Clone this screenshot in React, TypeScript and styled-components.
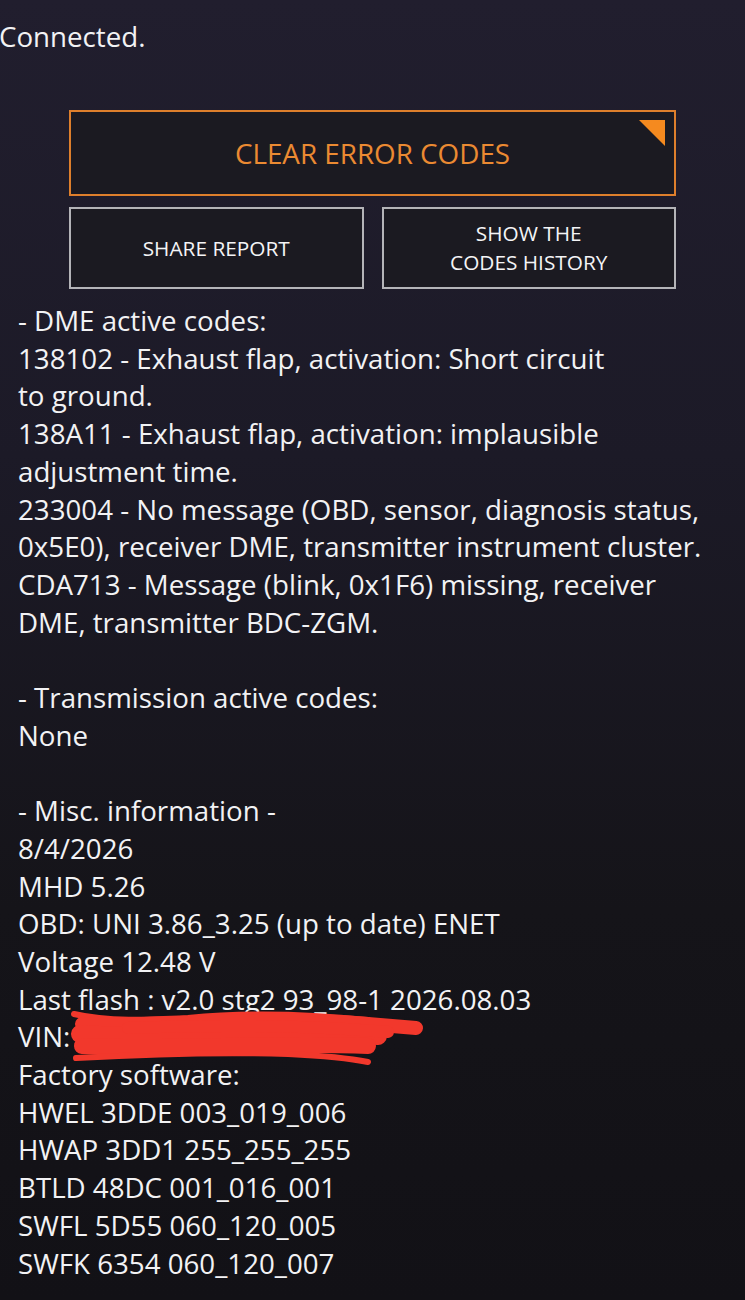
import React from "react";
import styled, { createGlobalStyle } from "styled-components";

const Global = createGlobalStyle`
  html, body { margin: 0; padding: 0; }
  body {
    background: linear-gradient(180deg, #211e2e 0%, #1c1a27 35%, #151419 70%, #121116 100%);
    min-height: 1300px;
    font-family: "Open Sans", "Noto Sans", sans-serif;
    color: #f2f2f4;
  }
`;

const Page = styled.div`
  width: 745px;
  min-height: 1300px;
  display: flex;
  flex-direction: column;
`;

const Status = styled.div`
  font-size: 27.7px;
  line-height: 38px;
  padding: 17px 0 0 0;
  margin-left: -1px;
`;

const Actions = styled.div`
  margin: 55px 0 0 69px;
  width: 607px;
  display: grid;
  grid-template-columns: 1fr 1fr;
  column-gap: 18px;
  row-gap: 11px;
`;

const Button = styled.div<{ $accent?: boolean }>`
  position: relative;
  box-sizing: border-box;
  grid-column: ${(p) => (p.$accent ? "1 / span 2" : "auto")};
  height: ${(p) => (p.$accent ? 86 : 82)}px;
  border: 2px solid ${(p) => (p.$accent ? "#de7f2c" : "#b4b4b8")};
  background: #1b1a21;
  color: ${(p) => (p.$accent ? "#eb8a32" : "#f4f4f6")};
  font-size: ${(p) => (p.$accent ? 27.8 : 20.8)}px;
  line-height: 29px;
  display: flex;
  align-items: center;
  justify-content: center;
  text-align: center;
  text-transform: uppercase;
`;

const Corner = styled.span`
  position: absolute;
  top: 8px;
  right: 9px;
  width: 26px;
  height: 26px;
  background: #f58a1f;
  clip-path: polygon(0 0, 100% 0, 100% 100%);
`;

const Report = styled.div`
  margin-top: 13px;
  padding-left: 18px;
  font-size: 27.7px;
  line-height: 37.7px;
  white-space: pre;
`;

const Line = styled.div`
  position: relative;
  min-height: 37.7px;
`;

const Redaction = styled.svg`
  position: absolute;
  left: 50px;
  top: -10px;
  width: 360px;
  height: 56px;
  overflow: visible;
`;

const lines: string[] = [
  "- DME active codes:",
  "138102 - Exhaust flap, activation: Short circuit",
  "to ground.",
  "138A11 - Exhaust flap, activation: implausible",
  "adjustment time.",
  "233004 - No message (OBD, sensor, diagnosis status,",
  "0x5E0), receiver DME, transmitter instrument cluster.",
  "CDA713 - Message (blink, 0x1F6) missing, receiver",
  "DME, transmitter BDC-ZGM.",
  "",
  "- Transmission active codes:",
  "None",
  "",
  "- Misc. information -",
  "8/4/2026",
  "MHD 5.26",
  "OBD: UNI 3.86_3.25 (up to date) ENET",
  "Voltage 12.48 V",
  "Last flash : v2.0 stg2 93_98-1 2026.08.03",
  "VIN: ",
  "Factory software:",
  "HWEL 3DDE 003_019_006",
  "HWAP 3DD1 255_255_255",
  "BTLD 48DC 001_016_001",
  "SWFL 5D55 060_120_005",
  "SWFK 6354 060_120_007",
];

function Scribble() {
  return (
    <Redaction viewBox="0 0 360 56" aria-hidden>
      <g fill="none" stroke="#f2382c" strokeLinecap="round" strokeLinejoin="round">
        <path d="M6 6 C 40 14, 80 12, 120 10 C 180 4, 240 6, 300 12" strokeWidth="6" />
        <path d="M14 16 C 100 18, 200 8, 300 16 L 348 20" strokeWidth="14" />
        <path d="M12 26 C 100 32, 200 20, 310 28" strokeWidth="18" />
        <path d="M14 38 C 110 42, 200 34, 300 38" strokeWidth="16" />
        <path d="M8 50 C 80 46, 160 44, 220 46 C 260 48, 290 52, 300 54" strokeWidth="6" />
        <path d="M60 20 C 150 16, 250 18, 320 24" strokeWidth="12" />
      </g>
    </Redaction>
  );
}

export default function App() {
  return (
    <Page>
      <Global />
      <Status>Connected.</Status>
      <Actions>
        <Button $accent>
          Clear error codes
          <Corner />
        </Button>
        <Button>Share report</Button>
        <Button>
          Show the
          <br />
          codes history
        </Button>
      </Actions>
      <Report>
        {lines.map((l, i) => (
          <Line key={i}>
            {l}
            {l.startsWith("VIN") && <Scribble />}
          </Line>
        ))}
      </Report>
    </Page>
  );
}
